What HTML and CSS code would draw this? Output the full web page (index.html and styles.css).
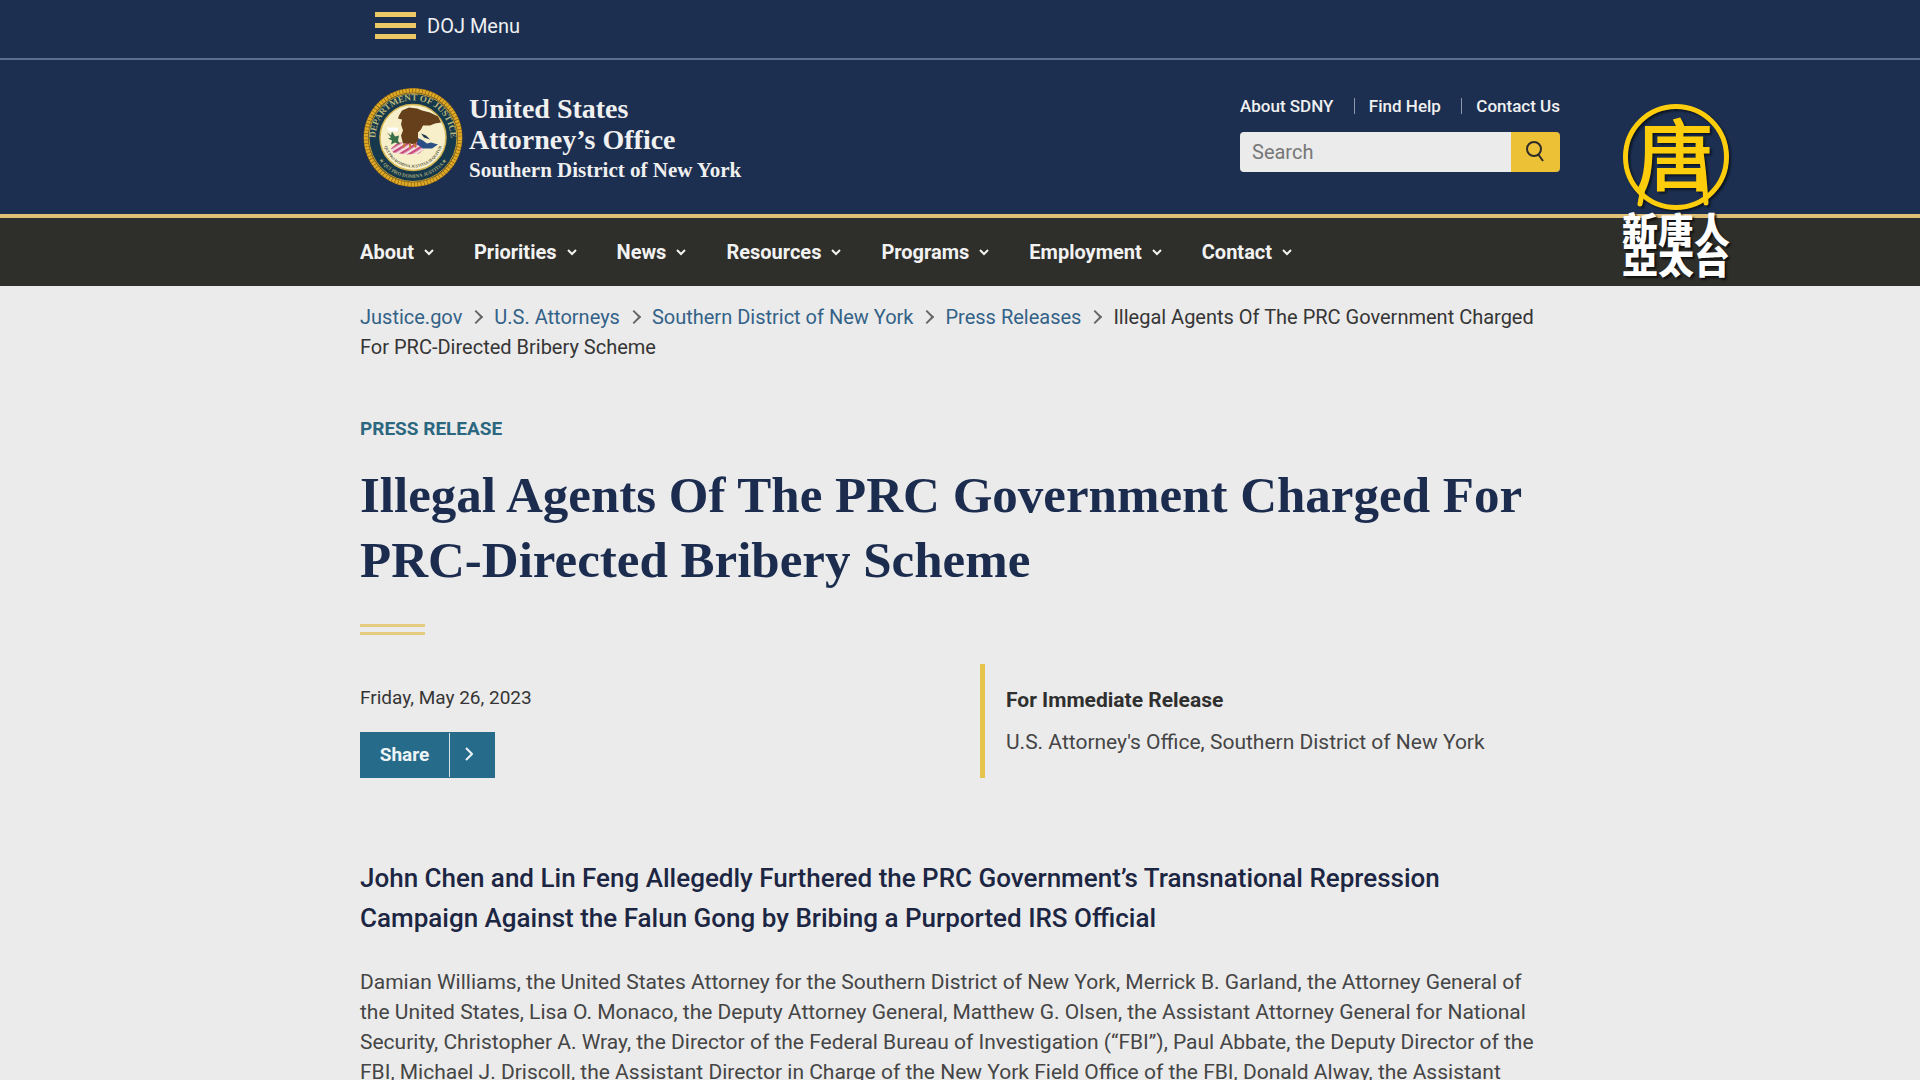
FILE: index.html
```html
<!DOCTYPE html>
<html lang="en">
<head>
    <meta charset="UTF-8">
    <meta name="viewport" content="width=device-width, initial-scale=1.0">
    <title>Illegal Agents Of The PRC Government Charged For PRC-Directed Bribery Scheme</title>
    <link rel="stylesheet" href="styles.css">
</head>
<body>
    <header class="site-header">
        <div class="top-bar">
            <div class="container">
                <button class="menu-button" type="button">
                    <span class="menu-icon"><span></span><span></span><span></span></span>
                    DOJ Menu
                </button>
            </div>
        </div>

        <div class="container brand-row">
            <a class="brand" href="#">
                <svg class="seal" viewBox="0 0 100 100" aria-hidden="true">
                    <defs>
                        <path id="sealTop" d="M13.500 59 A37.500 37.500 0 1 1 86.500 59"/>
                        <path id="sealBottom" d="M11 62 A41 41 0 0 0 89 62"/>
                        <path id="sealMotto" d="M20 50 A30 30 0 0 0 80 50"/>
                        <pattern id="stripes" width="5" height="5" patternUnits="userSpaceOnUse" patternTransform="rotate(58)">
                            <rect width="5" height="5" fill="#f3dfe2"/>
                            <rect width="2.500" height="5" fill="#c9487c"/>
                        </pattern>
                    </defs>
                    <circle cx="50" cy="50" r="49.500" fill="#8a6418"/>
                    <circle cx="50" cy="50" r="47" fill="none" stroke="#e0aa25" stroke-width="4" stroke-dasharray="2.600 .7"/>
                    <circle cx="50" cy="50" r="44.500" fill="#16384c"/>
                    <circle cx="50" cy="50" r="44" fill="none" stroke="#c9a032" stroke-width="1"/>
                    <text class="seal-name"><textPath href="#sealTop" startOffset="50%" text-anchor="middle">DEPARTMENT OF JUSTICE</textPath></text>
                    <text class="seal-motto-outer"><textPath href="#sealBottom" startOffset="50%" text-anchor="middle">★ QUI PRO DOMINA JUSTITIA ★</textPath></text>
                    <circle cx="50" cy="50" r="33" fill="#f6efca" stroke="#d3b450" stroke-width="1.500"/>
                    <text class="seal-motto"><textPath href="#sealMotto" startOffset="50%" text-anchor="middle">QUI PRO DOMINA JUSTITIA SEQUITUR</textPath></text>
                    <path d="M24 40h11v4H26z" fill="#fff"/>
                    <path d="M28 61 L35 55 L58 55 L62 61 L56 66 L44 67 L30 65z" fill="url(#stripes)"/>
                    <path d="M24 45l4 3 1-4 3 5 4-1-1 5 2 4-5-2-4 2 1-4-4-2 3-1z" fill="#3a7049"/>
                    <path d="M54 50l6 3 4 3 4-1 7 2-6 4-9 0-6-4z" fill="#2a4f86"/>
                    <path d="M58 46l5 2 4 4-6-2z" fill="#20344d"/>
                    <path d="M36 28l3-5 7-3 8 1 5 2 8 2 8 4 3 6-6 1-5 2-7 0-2 4-3 3 0 8-3 4-5-1-7 0-2-8 2-5-2-6 1-5-4-1z" fill="#65401b"/>
                    <path d="M42 56l-2 4M47 56v5M51 56l2 4" stroke="#c47b32" stroke-width="2" fill="none"/>
                </svg>
                <span class="brand-text">
                    <span class="brand-office">United States<br>Attorney’s Office</span>
                    <span class="brand-district">Southern District of New York</span>
                </span>
            </a>
            <div class="utility">
                <nav class="utility-links" aria-label="Utility">
                    <a href="#">About SDNY</a>
                    <a href="#">Find Help</a>
                    <a href="#">Contact Us</a>
                </nav>
                <form class="search">
                    <input type="search" placeholder="Search" aria-label="Search">
                    <button type="submit" aria-label="Search">
                        <svg viewBox="0 0 20 24" width="20" height="24" aria-hidden="true"><circle cx="8" cy="9" r="7" /><path d="M12 14l5 7"/></svg>
                    </button>
                </form>
            </div>
        </div>

        <nav class="main-nav" aria-label="Main">
            <ul class="container">
                <li><a href="#">About <svg class="caret" viewBox="0 0 10 10"><path d="M1 3l4 4 4-4"/></svg></a></li>
                <li><a href="#">Priorities <svg class="caret" viewBox="0 0 10 10"><path d="M1 3l4 4 4-4"/></svg></a></li>
                <li><a href="#">News <svg class="caret" viewBox="0 0 10 10"><path d="M1 3l4 4 4-4"/></svg></a></li>
                <li><a href="#">Resources <svg class="caret" viewBox="0 0 10 10"><path d="M1 3l4 4 4-4"/></svg></a></li>
                <li><a href="#">Programs <svg class="caret" viewBox="0 0 10 10"><path d="M1 3l4 4 4-4"/></svg></a></li>
                <li><a href="#">Employment <svg class="caret" viewBox="0 0 10 10"><path d="M1 3l4 4 4-4"/></svg></a></li>
                <li><a href="#">Contact <svg class="caret" viewBox="0 0 10 10"><path d="M1 3l4 4 4-4"/></svg></a></li>
            </ul>
        </nav>

        <!-- broadcaster logo over the header -->
        <div class="channel-logo" lang="zh-Hant">
            <svg class="channel-mark" viewBox="0 0 116 116" aria-hidden="true">
                <circle cx="58" cy="58" r="50.500"/>
                <text x="57" y="85" text-anchor="middle">唐</text>
                <path d="M82 46q4 26 6 58M26 84l-4 21"/>
            </svg>
            <div class="channel-name">新唐人<br>亞太台</div>
        </div>
    </header>

    <main class="container">
        <nav aria-label="Breadcrumb">
            <ol class="breadcrumb">
                <li><a href="#">Justice.gov</a></li>
                <li><a href="#">U.S. Attorneys</a></li>
                <li><a href="#">Southern District of New York</a></li>
                <li><a href="#">Press Releases</a></li>
                <li>Illegal Agents Of The PRC Government Charged For PRC-Directed Bribery Scheme</li>
            </ol>
        </nav>

        <article>
            <p class="kicker">PRESS RELEASE</p>
            <h1>Illegal Agents Of The PRC Government Charged For PRC-Directed Bribery Scheme</h1>
            <div class="double-rule"></div>

            <div class="meta">
                <div class="meta-date">
                    <time datetime="2023-05-26">Friday, May 26, 2023</time>
                    <button class="share" type="button">
                        <span class="share-label">Share</span>
                        <span class="share-arrow"><svg viewBox="0 0 8 14" width="8" height="14"><path d="M1 1l6 6-6 6"/></svg></span>
                    </button>
                </div>
                <div class="meta-release">
                    <p class="release-title">For Immediate Release</p>
                    <p>U.S. Attorney's Office, Southern District of New York</p>
                </div>
            </div>

            <h2>John Chen and Lin Feng Allegedly Furthered the PRC Government’s Transnational Repression Campaign Against the Falun Gong by Bribing a Purported IRS Official</h2>
            <p class="story">Damian Williams, the United States Attorney for the Southern District of New York, Merrick B. Garland, the Attorney General of the United States, Lisa O. Monaco, the Deputy Attorney General, Matthew G. Olsen, the Assistant Attorney General for National Security, Christopher A. Wray, the Director of the Federal Bureau of Investigation (“FBI”), Paul Abbate, the Deputy Director of the FBI, Michael J. Driscoll, the Assistant Director in Charge of the New York Field Office of the FBI, Donald Alway, the Assistant</p>
        </article>
    </main>
</body>
</html>
```
FILE: styles.css
```css
* {
    box-sizing: border-box;
}
body {
    margin: 0;
    background-color: #ebebeb;
    color: #454545;
    font-family: Roboto, "Liberation Sans", sans-serif;
    font-size: 20px;
    line-height: 30px;
    height: 100vh;
    overflow: hidden;
}
p, h1, h2, ul, ol {
    margin: 0;
    padding: 0;
}
ul, ol {
    list-style: none;
}
a {
    color: #336288;
    text-decoration: none;
}
button {
    border: none;
    font: inherit;
    cursor: pointer;
}
.container {
    max-width: 1200px;
    margin: 0 auto;
}

/* header */
.site-header {
    position: relative;
    background-color: #1c2f50;
}
.top-bar {
    border-bottom: 2px solid #5b6e93;
}
.menu-button {
    display: flex;
    align-items: center;
    gap: 11px;
    height: 58px;
    padding: 0 15px 7px;
    background: none;
    color: #eef0f2;
}
.menu-icon {
    display: grid;
    gap: 6px;
}
.menu-icon span {
    width: 41px;
    height: 5px;
    background-color: #ebc765;
}
.brand-row {
    display: flex;
    justify-content: space-between;
    padding: 27px 0 26px;
}
.brand {
    display: flex;
    gap: 6px;
    padding-left: 3px;
    color: #f0f0f0;
    font-family: "Liberation Serif", serif;
    font-weight: bold;
}
.seal {
    width: 100px;
    height: 101px;
}
.seal-name {
    fill: #b9b77c;
    font: bold 9px "Liberation Serif", serif;
}
.seal-motto-outer {
    fill: #a3a676;
    font: bold 5px "Liberation Serif", serif;
}
.seal-motto {
    fill: #55533f;
    font: bold 4px "Liberation Serif", serif;
}
.brand-text {
    display: flex;
    flex-direction: column;
    padding-top: 6px;
}
.brand-office {
    font-size: 28px;
    line-height: 31px;
}
.brand-district {
    font-size: 21px;
    line-height: 31px;
}
.utility {
    width: 320px;
    padding-top: 4px;
}
.utility-links {
    display: flex;
    justify-content: space-between;
}
.utility-links a {
    color: #f0f0f0;
    font-size: 17px;
    font-weight: 500;
}
.utility-links a + a {
    background: linear-gradient(#8c97aa, #8c97aa) left center / 1px 16px no-repeat;
    padding-left: 15px;
}
.search {
    display: flex;
    height: 40px;
    margin-top: 11px;
    border-radius: 4px;
    overflow: hidden;
}
.search input {
    flex: 1;
    min-width: 0;
    border: none;
    padding: 0 12px;
    background-color: #ebebeb;
    font: inherit;
}
.search input::placeholder {
    color: #777;
}
.search button {
    display: grid;
    place-items: center;
    width: 49px;
    padding: 0;
    background-color: #ecc136;
}
.search svg {
    fill: none;
    stroke: #2e2c28;
    stroke-width: 2;
}

/* main navigation */
.main-nav {
    border-top: 4px solid #dfc078;
    background-color: #2e2e2a;
}
.main-nav ul {
    display: flex;
    gap: 40px;
    height: 68px;
}
.main-nav a {
    display: flex;
    align-items: center;
    gap: 10px;
    height: 68px;
    color: #f2f2f2;
    font-weight: bold;
}
.caret {
    width: 10px;
    height: 10px;
    fill: none;
    stroke: #f2f2f2;
    stroke-width: 2;
}

/* channel logo */
.channel-logo {
    position: absolute;
    top: 99px;
    right: 178px;
    width: 132px;
    text-align: center;
}
.channel-mark {
    display: block;
    width: 116px;
    height: 116px;
    margin: 0 auto;
    fill: none;
    stroke: #fdcd0b;
    stroke-width: 5;
    stroke-linecap: round;
    overflow: visible;
    filter: drop-shadow(2px 2px 1px #0c1524);
}
.channel-mark text {
    fill: #fdcd0b;
    stroke-width: 2;
    font: 400 76px "Noto Sans CJK TC", sans-serif;
}
.channel-name {
    color: #fff;
    font-family: "Noto Sans CJK TC", sans-serif;
    font-size: 36px;
    font-weight: 900;
    line-height: 30px;
    margin-top: -2px;
    text-shadow: 2px 2px 2px #111;
}

/* breadcrumb */
.breadcrumb {
    padding-top: 16px;
    color: #353535;
}
.breadcrumb li {
    display: inline;
}
.breadcrumb li + li::before {
    content: "";
    display: inline-block;
    width: 8px;
    height: 8px;
    margin: 0 13px 2px 4px;
    border: solid #666;
    border-width: 2px 2px 0 0;
    transform: rotate(45deg);
}

/* article */
article {
    max-width: 1190px;
}
.kicker {
    padding-top: 52px;
    color: #2c6780;
    font-size: 19px;
    font-weight: bold;
}
h1 {
    margin-top: 19px;
    color: #1c2c4e;
    font-family: "Liberation Serif", serif;
    font-size: 51px;
    line-height: 65px;
}
.double-rule {
    width: 65px;
    height: 11px;
    margin-top: 31px;
    border: solid #e3cc80;
    border-width: 3px 0;
}
.meta {
    display: grid;
    grid-template-columns: 620px 1fr;
    margin-top: 29px;
}
.meta-date {
    display: flex;
    flex-direction: column;
    align-items: flex-start;
    gap: 19px;
    padding-top: 19px;
}
.meta time {
    color: #353535;
    font-size: 19px;
}
.share {
    display: flex;
    align-items: center;
    height: 46px;
    padding: 0;
    background-color: #276b8b;
    color: #eef4f6;
    font-size: 19px;
    font-weight: bold;
}
.share-label {
    width: 90px;
    border-right: 1px solid #d5e3e9;
    line-height: 44px;
}
.share-arrow {
    width: 45px;
    padding-right: 8px;
}
.share svg {
    fill: none;
    stroke: #eef4f6;
    stroke-width: 2;
}
.meta-release {
    border-left: 5px solid #e6c44c;
    padding: 21px 0 21px 21px;
    display: grid;
    gap: 12px;
    font-size: 21px;
}
.release-title {
    color: #2f2f2f;
    font-weight: bold;
}
h2 {
    margin-top: 80px;
    color: #1c2643;
    font-size: 26px;
    font-weight: 500;
    line-height: 40px;
}
.story {
    margin-top: 29px;
    font-size: 21px;
}
```
